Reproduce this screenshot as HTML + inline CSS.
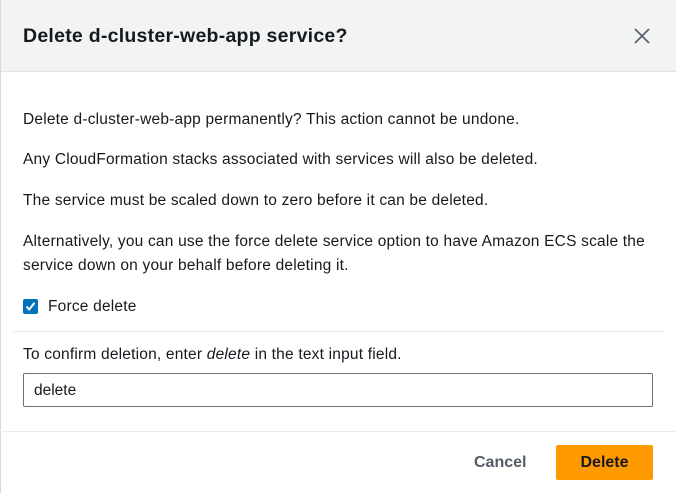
<!DOCTYPE html>
<html><head><style>
body{margin:0;width:676px;height:493px;background:#fff;font-family:"Liberation Sans",sans-serif;color:#16191f;position:relative;overflow:hidden}
.hdr{position:absolute;left:0;top:0;width:676px;height:72px;background:#f2f3f3;border-bottom:1px solid #e0e2e4;border-left:1px solid #d5dbdb;box-sizing:border-box}
.lb{position:absolute;left:0;top:0;width:1px;height:493px;background:#d5dbdb}
.t{position:absolute;left:23px;font-size:15.5px;letter-spacing:0.2px;white-space:nowrap;line-height:20px}
h1{position:absolute;left:23px;top:24px;margin:0;font-size:19.5px;letter-spacing:0.25px;font-weight:bold;line-height:24px}
.x{position:absolute;left:634px;top:28px}
.cb{position:absolute;left:23px;top:299px;width:15px;height:15px;background:#0073bb;border-radius:2px}
.div{position:absolute;left:12px;width:652px;height:1px;background:#eaeded}
.inp{position:absolute;left:23px;top:373px;width:630px;height:34px;border:1px solid #687078;border-radius:2px;box-sizing:border-box;font-size:15.5px;padding:8px 10px;line-height:17px}
.cancel{position:absolute;left:474px;top:454px;font-size:16px;font-weight:bold;color:#545b64}
.del{position:absolute;left:556px;top:445px;width:97px;height:35px;background:#ff9900;border-radius:2px;font-size:16px;font-weight:bold;text-align:center;line-height:36px}
</style></head><body>
<div class="hdr"></div><div class="lb"></div>
<h1>Delete d-cluster-web-app service?</h1>
<svg class="x" width="16" height="16" viewBox="0 0 16 16"><path d="M1 1L15 15M15 1L1 15" stroke="#545b64" stroke-width="1.6"/></svg>
<div class="t" style="top:110px">Delete d-cluster-web-app permanently? This action cannot be undone.</div>
<div class="t" style="top:150px">Any CloudFormation stacks associated with services will also be deleted.</div>
<div class="t" style="top:191px">The service must be scaled down to zero before it can be deleted.</div>
<div class="t" style="top:232px">Alternatively, you can use the force delete service option to have Amazon ECS scale the</div>
<div class="t" style="top:256px">service down on your behalf before deleting it.</div>
<div class="cb"><svg width="15" height="15" viewBox="0 0 15 15"><path d="M3.5 7.5L6.2 10.5L11.5 3.8" fill="none" stroke="#fff" stroke-width="2"/></svg></div>
<div class="t" style="top:297px;left:48px">Force delete</div>
<div class="div" style="top:331px"></div>
<div class="t" style="top:345px">To confirm deletion, enter <i>delete</i> in the text input field.</div>
<div class="inp">delete</div>
<div class="div" style="top:431px;left:0;width:676px"></div>
<div class="cancel">Cancel</div>
<div class="del">Delete</div>
</body></html>
